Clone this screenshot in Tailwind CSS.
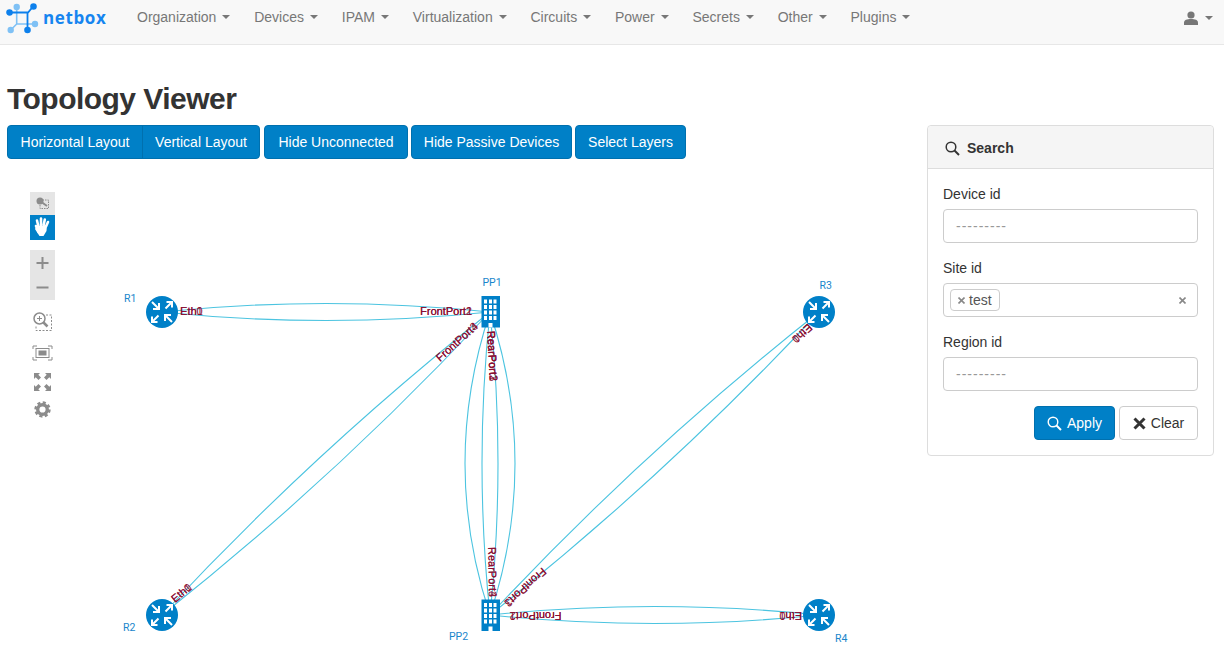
<!DOCTYPE html>
<html lang="en">
<head>
<meta charset="utf-8">
<title>Topology Viewer</title>
<script src="https://cdn.jsdelivr.net/npm/@tailwindcss/browser@4"></script>
</head>
<body class="bg-white font-['Liberation_Sans',Arial,sans-serif] text-[14px] text-[#333] overflow-hidden">
<div class="w-[1224px] h-[656px] overflow-hidden">
  <nav class="h-[45px] bg-[#f8f8f8] border-b border-[#e7e7e7] flex items-start pl-[8px] pr-[11px] text-[#777]">
    <div class="flex items-center w-[129px] h-[35px] shrink-0">
      <svg width="30" height="30" viewBox="0 0 30 30" class="shrink-0 self-start mt-[6px] overflow-visible">
        <g stroke="#7fc1f5" stroke-width="1.600" fill="#7fc1f5">
          <path d="M8.700 1 V18 L2.700 24 M8.700 18 H27" fill="none"/>
          <circle cx="8.700" cy="1" r="2.400"/><circle cx="2.700" cy="24" r="2.400"/><circle cx="27" cy="18" r="2.400"/>
        </g>
        <g stroke="#0d80ec" stroke-width="1.800" fill="#0d80ec">
          <path d="M1.500 6.500 H20 L25.500 0 M19.500 6.500 V24" fill="none"/>
          <circle cx="1.500" cy="6.500" r="2.400"/><circle cx="25.500" cy="0.500" r="2.400"/><circle cx="19.500" cy="24" r="2.400"/>
        </g>
      </svg>
      <span class="ml-[5px] font-['Open_Sans',sans-serif] font-bold text-[17px] tracking-[0.6px] text-[#1685f0]">netbox</span>
    </div>
    <ul class="flex items-center h-[34px] gap-[23.8px]">
      <li class="flex items-center">Organization<span class="ml-[6px] w-0 h-0 border-x-[4px] border-x-transparent border-t-[4px] border-t-[#777]"></span></li>
      <li class="flex items-center">Devices<span class="ml-[6px] w-0 h-0 border-x-[4px] border-x-transparent border-t-[4px] border-t-[#777]"></span></li>
      <li class="flex items-center">IPAM<span class="ml-[6px] w-0 h-0 border-x-[4px] border-x-transparent border-t-[4px] border-t-[#777]"></span></li>
      <li class="flex items-center">Virtualization<span class="ml-[6px] w-0 h-0 border-x-[4px] border-x-transparent border-t-[4px] border-t-[#777]"></span></li>
      <li class="flex items-center">Circuits<span class="ml-[6px] w-0 h-0 border-x-[4px] border-x-transparent border-t-[4px] border-t-[#777]"></span></li>
      <li class="flex items-center">Power<span class="ml-[6px] w-0 h-0 border-x-[4px] border-x-transparent border-t-[4px] border-t-[#777]"></span></li>
      <li class="flex items-center">Secrets<span class="ml-[6px] w-0 h-0 border-x-[4px] border-x-transparent border-t-[4px] border-t-[#777]"></span></li>
      <li class="flex items-center">Other<span class="ml-[6px] w-0 h-0 border-x-[4px] border-x-transparent border-t-[4px] border-t-[#777]"></span></li>
      <li class="flex items-center">Plugins<span class="ml-[6px] w-0 h-0 border-x-[4px] border-x-transparent border-t-[4px] border-t-[#777]"></span></li>
    </ul>
    <div class="ml-auto flex items-center h-[36px] gap-[7px]">
      <svg width="14" height="14" viewBox="0 0 14 14" fill="#777"><circle cx="7" cy="4" r="3.600"/><path d="M0 14 V11.500 C0 9 3 8 7 8 S14 9 14 11.500 V14 Z"/></svg>
      <span class="w-0 h-0 border-x-[4px] border-x-transparent border-t-[4px] border-t-[#777]"></span>
    </div>
  </nav>

  <h1 class="px-[7px] mt-[37px] text-[30px] leading-[33px] font-bold text-[#333] tracking-[-0.53px]">Topology Viewer</h1>

  <div class="flex items-start pl-[7px] mt-[10px]">
    <div class="w-[920px] shrink-0">
      <div class="flex gap-[3px] text-white">
        <div class="flex h-[34px] w-[253px] rounded-[4px] bg-[#0080c7] border border-[#0070ae]">
          <span class="flex items-center justify-center w-[135px] border-r border-[#0070ae]">Horizontal Layout</span>
          <span class="flex items-center justify-center flex-1">Vertical Layout</span>
        </div>
        <span class="flex items-center justify-center h-[34px] w-[144px] ml-[1px] rounded-[4px] bg-[#0080c7] border border-[#0070ae]">Hide Unconnected</span>
        <span class="flex items-center justify-center h-[34px] w-[161px] rounded-[4px] bg-[#0080c7] border border-[#0070ae]">Hide Passive Devices</span>
        <span class="flex items-center justify-center h-[34px] w-[111px] rounded-[4px] bg-[#0080c7] border border-[#0070ae]">Select Layers</span>
      </div>
      <svg width="920" height="497" viewBox="7 159 920 497" class="block">
        <defs>
          <g id="router">
            <circle r="16" fill="#0080c8"/>
            <g stroke="#fff" stroke-width="2" fill="none">
              <path d="M-10 -10 L-3.500 -3.500 M-3 -9 V-3 H-9"/>
              <path d="M3.500 -3.500 L10 -10 M4.500 -10 H10 V-4.500"/>
              <path d="M-3.500 3.500 L-10 10 M-4.500 10 H-10 V4.500"/>
              <path d="M10 10 L3.500 3.500 M3 9 V3 H9"/>
            </g>
          </g>
          <g id="building">
            <rect x="-9" y="-16" width="18.500" height="31.500" fill="#0080c8"/>
            <g fill="#fff">
              <rect x="-6.500" y="-12.500" width="3" height="4"/><rect x="-1.500" y="-12.500" width="3" height="4"/><rect x="3" y="-12.500" width="3" height="4"/>
              <rect x="-6.500" y="-7" width="3" height="4"/><rect x="-1.500" y="-7" width="3" height="4"/><rect x="3" y="-7" width="3" height="4"/>
              <rect x="-6.500" y="-1.500" width="3" height="4"/><rect x="-1.500" y="-1.500" width="3" height="4"/><rect x="3" y="-1.500" width="3" height="4"/>
              <rect x="-6.500" y="4" width="3" height="4"/><rect x="-1.500" y="4" width="3" height="4"/><rect x="3" y="4" width="3" height="4"/>
              <rect x="-2" y="11" width="4" height="4.500"/>
            </g>
          </g>
        </defs>

        <!-- toolbar -->
        <rect x="30" y="192" width="25" height="23" fill="#e5e5e5"/>
        <rect x="30" y="215" width="25" height="25" fill="#0080c8"/>
        <rect x="30" y="250" width="25" height="50" fill="#e5e5e5"/>
        <g fill="#8c8c8c">
          <circle cx="40" cy="201" r="3.500"/>
          <path d="M40 201 L47 206" stroke="#8c8c8c" stroke-width="2"/>
          <rect x="40" y="200" width="8.500" height="8.500" fill="none" stroke="#8c8c8c" stroke-width="1" stroke-dasharray="1.500 1"/>
        </g>
        <g stroke="#fff" stroke-width="2.600" stroke-linecap="round" fill="none">
          <path d="M38.300 226 L37 220.500 M41 225 V218.500 M43.700 225 L44.800 219.500 M46 226.500 L48 222"/>
          <path d="M36 226 L38.500 232"/>
        </g>
        <path d="M37 226 L47 225 L46.500 231 L43.500 236 H39.500 L35 229 Z" fill="#fff"/>
        <path d="M42.500 257 V269 M36.500 263 H48.500 M36.500 287.500 H48.500" stroke="#8c8c8c" stroke-width="2" fill="none"/>
        <g fill="none" stroke="#8c8c8c">
          <circle cx="39.500" cy="318.500" r="5.500" stroke-width="1.500"/>
          <path d="M37 318.500 H42 M39.500 316 V321" stroke-width="1"/>
          <path d="M43.500 322.500 L47.500 326.500" stroke-width="2.500"/>
          <path d="M46 315 H51.500 V330.500 H36 V326" stroke-width="1" stroke-dasharray="2 1.500"/>
        </g>
        <g fill="none" stroke="#8c8c8c">
          <path d="M33 349 V346 H37 M48 346 H52 V349 M52 357 V360 H48 M37 360 H33 V357" stroke-width="1"/>
          <rect x="36" y="348.500" width="13" height="9" stroke-width="1"/>
          <rect x="38.500" y="350.500" width="8" height="5" fill="#8c8c8c" stroke="none"/>
        </g>
        <g fill="#8c8c8c">
          <path d="M34 373 H40 L38.300 374.700 L41 377.500 L38.500 380 L35.700 377.300 L34 379 Z"/>
          <path d="M51 373 H45 L46.700 374.700 L44 377.500 L46.500 380 L49.300 377.300 L51 379 Z"/>
          <path d="M34 391 H40 L38.300 389.300 L41 386.500 L38.500 384 L35.700 386.700 L34 385 Z"/>
          <path d="M51 391 H45 L46.700 389.300 L44 386.500 L46.500 384 L49.300 386.700 L51 385 Z"/>
        </g>
        <circle cx="42.500" cy="409.500" r="4.800" fill="none" stroke="#8c8c8c" stroke-width="3.400"/>
        <circle cx="42.500" cy="409.500" r="7" fill="none" stroke="#8c8c8c" stroke-width="2.400" stroke-dasharray="3.100 2.400"/>

        <!-- links -->
        <g fill="none" stroke="#4cc4e0" stroke-width="1.100">
          <path d="M162 312 Q326 295 490 312"/>
          <path d="M162 312 Q326 329 490 312"/>
          <path d="M490 312 Q440 463.500 490 615"/>
          <path d="M490 312 Q474 463.500 490 615"/>
          <path d="M490 312 Q506 463.500 490 615"/>
          <path d="M490 312 Q540 463.500 490 615"/>
          <path d="M162 615 Q314.500 451 490 312"/>
          <path d="M162 615 Q337.500 476 490 312"/>
          <path d="M819 312 Q643 451 490 615"/>
          <path d="M819 312 Q666 476 490 615"/>
          <path d="M490 615 Q654.500 598 819 615"/>
          <path d="M490 615 Q654.500 632 819 615"/>
        </g>

        <!-- labels -->
        <g font-size="11" fill="#8a0f33">
          <text x="180" y="315">Eth0</text><text x="180.300" y="315.300">Eth1</text>
          <text x="420" y="315">FrontPort2</text><text x="420.300" y="315.300">FrontPort1</text>
          <text transform="translate(440 362) rotate(-42)">FrontPort3</text><text transform="translate(440.300 362.300) rotate(-42)">FrontPort4</text>
          <text transform="translate(487 331) rotate(87)">RearPort1</text><text transform="translate(487.400 331) rotate(87)">RearPort2</text><text transform="translate(487.200 331.300) rotate(87)">RearPort3</text>
          <text transform="translate(488 547) rotate(89)">RearPort3</text><text transform="translate(488.400 547) rotate(89)">RearPort4</text>
          <text transform="translate(175 603) rotate(-40)">Eth0</text><text transform="translate(175.300 603.300) rotate(-40)">Eth1</text>
          <text transform="translate(542 567) rotate(138)">FrontPort1</text><text transform="translate(542.300 567.300) rotate(138)">FrontPort3</text>
          <text transform="translate(561.500 612) rotate(180)">FrontPort2</text><text transform="translate(561.500 612.300) rotate(180)">FrontPort1</text>
          <text transform="translate(802 612) rotate(180)">Eth0</text><text transform="translate(802 612.300) rotate(180)">Eth1</text>
          <text transform="translate(808 323) rotate(138)">Eth0</text><text transform="translate(808.300 323.300) rotate(138)">Eth1</text>
        </g>

        <!-- nodes -->
        <use href="#router" x="162" y="312"/>
        <use href="#router" x="819" y="312"/>
        <use href="#router" x="162" y="615"/>
        <use href="#router" x="819" y="615"/>
        <use href="#building" x="490.500" y="312"/>
        <use href="#building" x="490.500" y="615.500"/>

        <g font-size="10.500" fill="#1a86cb" font-family="Roboto, sans-serif">
          <text x="124" y="302">R1</text>
          <text x="482.500" y="286">PP1</text>
          <text x="819.500" y="289">R3</text>
          <text x="123" y="631">R2</text>
          <text x="449" y="640">PP2</text>
          <text x="835" y="642">R4</text>
        </g>
      </svg>
    </div>

    <section class="w-[287px] shrink-0 border border-[#ddd] rounded-[4px] flex flex-col">
      <header class="h-[43px] pt-[2px] bg-[#f5f5f5] border-b border-[#ddd] rounded-t-[4px] flex items-center pl-[17px] gap-[7px] font-bold">
        <svg width="15" height="15" viewBox="0 0 15 15" fill="none" stroke="#333" stroke-width="1.500"><circle cx="6" cy="6" r="4.800"/><path d="M9.500 9.500 L14 14" stroke-width="2"/></svg>
        <span>Search</span>
      </header>
      <div class="px-[15px] pt-[15px] pb-[15px] flex flex-col">
        <label class="block leading-[20px] h-[20px]">Device id</label>
        <div class="mt-[5px] h-[34px] border border-[#ccc] rounded-[4px] flex items-center pl-[12px] text-[#999] tracking-[1px]">---------</div>
        <label class="block leading-[20px] h-[20px] mt-[15px]">Site id</label>
        <div class="mt-[5px] h-[34px] border border-[#ccc] rounded-[4px] flex items-center pl-[6px] pr-[11px]">
          <span class="flex items-center h-[22px] px-[7px] gap-[4px] border border-[#ccc] rounded-[4px] text-[#555]">
            <svg width="7" height="7" viewBox="0 0 7 7" stroke="#888" stroke-width="1.600"><path d="M0.500 0.500 L6.500 6.500 M6.500 0.500 L0.500 6.500"/></svg>test</span>
          <svg class="ml-auto" width="7" height="7" viewBox="0 0 7 7" stroke="#888" stroke-width="1.600"><path d="M0.500 0.500 L6.500 6.500 M6.500 0.500 L0.500 6.500"/></svg>
        </div>
        <label class="block leading-[20px] h-[20px] mt-[15px]">Region id</label>
        <div class="mt-[5px] h-[34px] border border-[#ccc] rounded-[4px] flex items-center pl-[12px] text-[#999] tracking-[1px]">---------</div>
        <div class="mt-[15px] flex justify-end gap-[4px]">
          <span class="h-[34px] w-[81px] rounded-[4px] bg-[#0080c7] border border-[#0070ae] text-white flex items-center justify-center gap-[5px]">
            <svg width="15" height="15" viewBox="0 0 15 15" fill="none" stroke="#fff" stroke-width="1.400"><circle cx="6" cy="6" r="4.800"/><path d="M9.500 9.500 L14 14" stroke-width="2"/></svg>Apply</span>
          <span class="h-[34px] w-[79px] rounded-[4px] bg-white border border-[#ccc] flex items-center justify-center gap-[5px]">
            <svg width="13" height="13" viewBox="0 0 13 13" stroke="#333" stroke-width="3"><path d="M1.500 1.500 L11.500 11.500 M11.500 1.500 L1.500 11.500"/></svg>Clear</span>
        </div>
      </div>
    </section>
  </div>
</div>
</body>
</html>
